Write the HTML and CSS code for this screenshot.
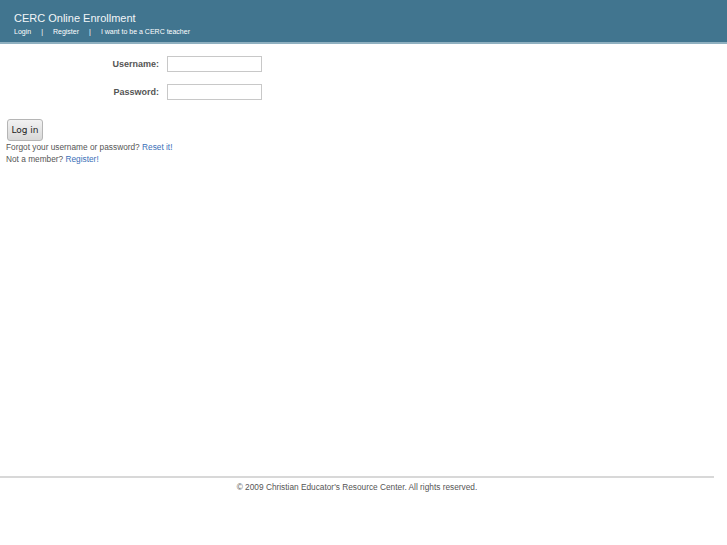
FILE: index.html
```html
<!DOCTYPE html>
<html>
<head>
<meta charset="utf-8">
<link rel="stylesheet" href="styles.css">
</head>
<body>
<div class="header">
  <div class="title">CERC Online Enrollment</div>
  <div class="nav">
    <a href="#">Login</a><span class="sep">|</span><a href="#">Register</a><span class="sep">|</span><a href="#">I want to be a CERC teacher</a>
  </div>
</div>
<div class="main">
  <form class="login">
    <div class="row"><label class="lbl">Username:</label><input class="field" type="text"></div>
    <div class="row"><label class="lbl">Password:</label><input class="field" type="password"></div>
    <button class="btn" type="button">Log in</button>
  </form>
  <p class="note">Forgot your username or password? <a href="#">Reset it!</a></p>
  <p class="note">Not a member? <a href="#">Register!</a></p>
</div>
<div class="footer">
  <div class="copy">© 2009 Christian Educator's Resource Center. All rights reserved.</div>
</div>
</body>
</html>
```
FILE: styles.css
```css
html, body { margin: 0; padding: 0; background: #fff; }
body { font-family: "Liberation Sans", Arial, sans-serif; color: #444; height: 545px; display: flex; flex-direction: column; }
.header { background: #41758f; border-bottom: 2px solid #8fb0c0; height: 44px; box-sizing: border-box; padding: 12px 0 0 14px; color: #fff; }
.title { font-size: 11px; line-height: 13px; color: #f2f6f8; }
.nav { font-size: 7px; line-height: 10px; margin-top: 2px; color: #fff; }
.nav a { color: #fff; text-decoration: none; }
.nav .sep { margin: 0 10px; }
.main { flex: 1; padding: 12px 0 0 6px; }
.login { display: flex; flex-direction: column; }
.row { display: flex; align-items: center; height: 16px; margin-bottom: 12px; }
.lbl { width: 161px; text-align: right; font-size: 9px; font-weight: bold; color: #555; padding-right: 8px; box-sizing: border-box; }
.field { width: 95px; height: 16px; box-sizing: border-box; border: 1px solid #c8c8c8; margin: 0; padding: 0; }
.btn { align-self: flex-start; margin: 7px 0 0 1px; width: 36px; height: 22px; padding: 0; border: 1px solid #b5b5b5; border-radius: 3px; background: linear-gradient(#f2f2f2, #d8d8d8); font-family: "DejaVu Sans", sans-serif; font-size: 9px; color: #222; }
.note { margin: 0; font-size: 8.3px; line-height: 12px; color: #555; }
.note a { color: #3a6fb8; text-decoration: none; }
.footer { width: 714px; border-top: 2px solid #d8d8d8; height: 69px; box-sizing: border-box; }
.copy { text-align: center; font-size: 8.3px; margin-top: 4px; color: #555; }
```
